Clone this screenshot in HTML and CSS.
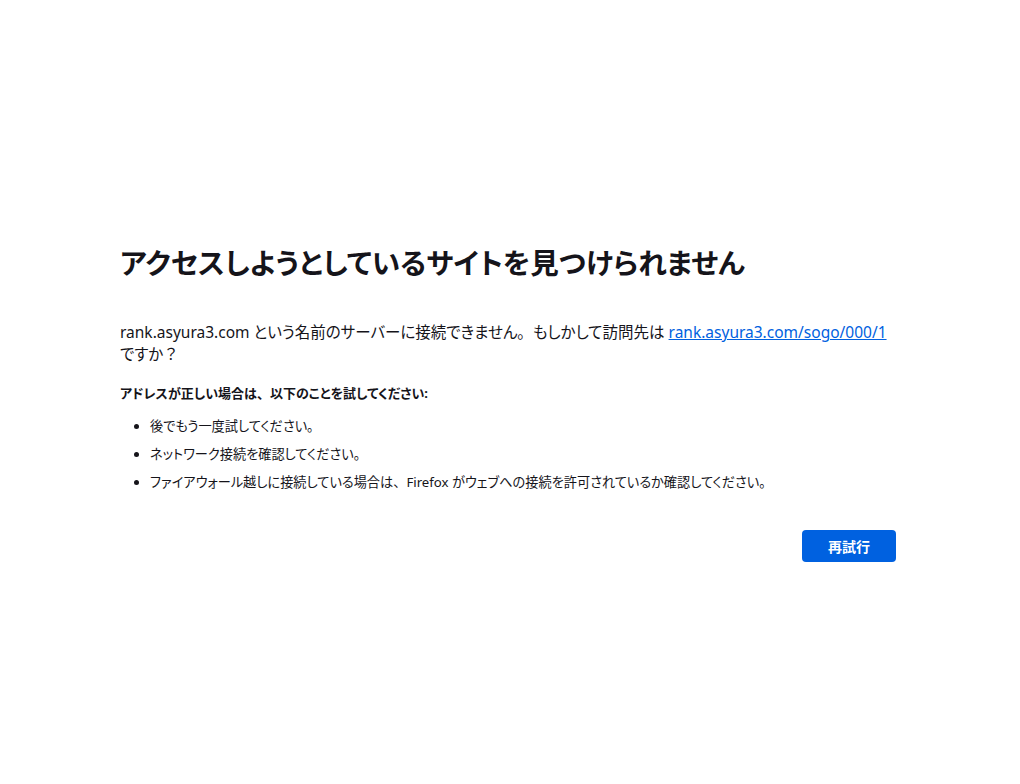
FILE: index.html
```html
<!DOCTYPE html>
<html lang="ja">
<head>
<meta charset="utf-8">
<title>サーバーが見つかりませんでした</title>
<link rel="stylesheet" href="styles.css">
</head>
<body>
<main class="container">
  <h1 class="title">アクセスしようとしているサイトを見つけられません</h1>
  <p class="desc">rank.asyura3.com という名前のサーバーに接続できません<span class="fw">。</span>もしかして訪問先は <a class="link" href="#">rank.asyura3.com/sogo/000/1</a> ですか<span class="fw">？</span></p>
  <p class="hint">アドレスが正しい場合は<span class="fw">、</span>以下のことを試してください:</p>
  <ul class="tips">
    <li>後でもう一度試してください<span class="fw">。</span></li>
    <li>ネットワーク接続を確認してください<span class="fw">。</span></li>
    <li>ファイアウォール越しに接続している場合は<span class="fw">、</span>Firefox がウェブへの接続を許可されているか確認してください<span class="fw">。</span></li>
  </ul>
  <div class="actions">
    <button class="retry">再試行</button>
  </div>
</main>
</body>
</html>
```

FILE: styles.css
```css
html, body {
  margin: 0;
  padding: 0;
  background: #ffffff;
}
body {
  font-family: "Noto Sans", "Noto Sans CJK JP", sans-serif;
  font-feature-settings: "palt";
  color: #15141a;
}
.fw {
  font-feature-settings: normal;
}
.container {
  width: 776px;
  margin-left: 120px;
  padding-top: 240px;
}
.title {
  margin: 0;
  font-size: 28.5px;
  line-height: 46px;
  font-weight: 700;
  letter-spacing: 0;
}
.desc {
  margin: 35px 0 0;
  font-size: 15.5px;
  line-height: 22px;
}
.link {
  color: #0061e0;
  text-decoration: underline;
}
.hint {
  margin: 17px 0 0;
  font-size: 13px;
  font-weight: 700;
  line-height: 22px;
}
.tips {
  margin: 12px 0 0;
  padding-left: 30px;
  font-size: 13.2px;
  line-height: 20px;
}
.tips li {
  margin-bottom: 8px;
}
.actions {
  display: flex;
  justify-content: flex-end;
  margin-top: 38px;
}
.retry {
  width: 94px;
  height: 32px;
  border: none;
  border-radius: 4px;
  background: #0061e0;
  color: #ffffff;
  font-family: "Noto Sans", "Noto Sans CJK JP", sans-serif;
  font-size: 14px;
  font-weight: 700;
}
```
